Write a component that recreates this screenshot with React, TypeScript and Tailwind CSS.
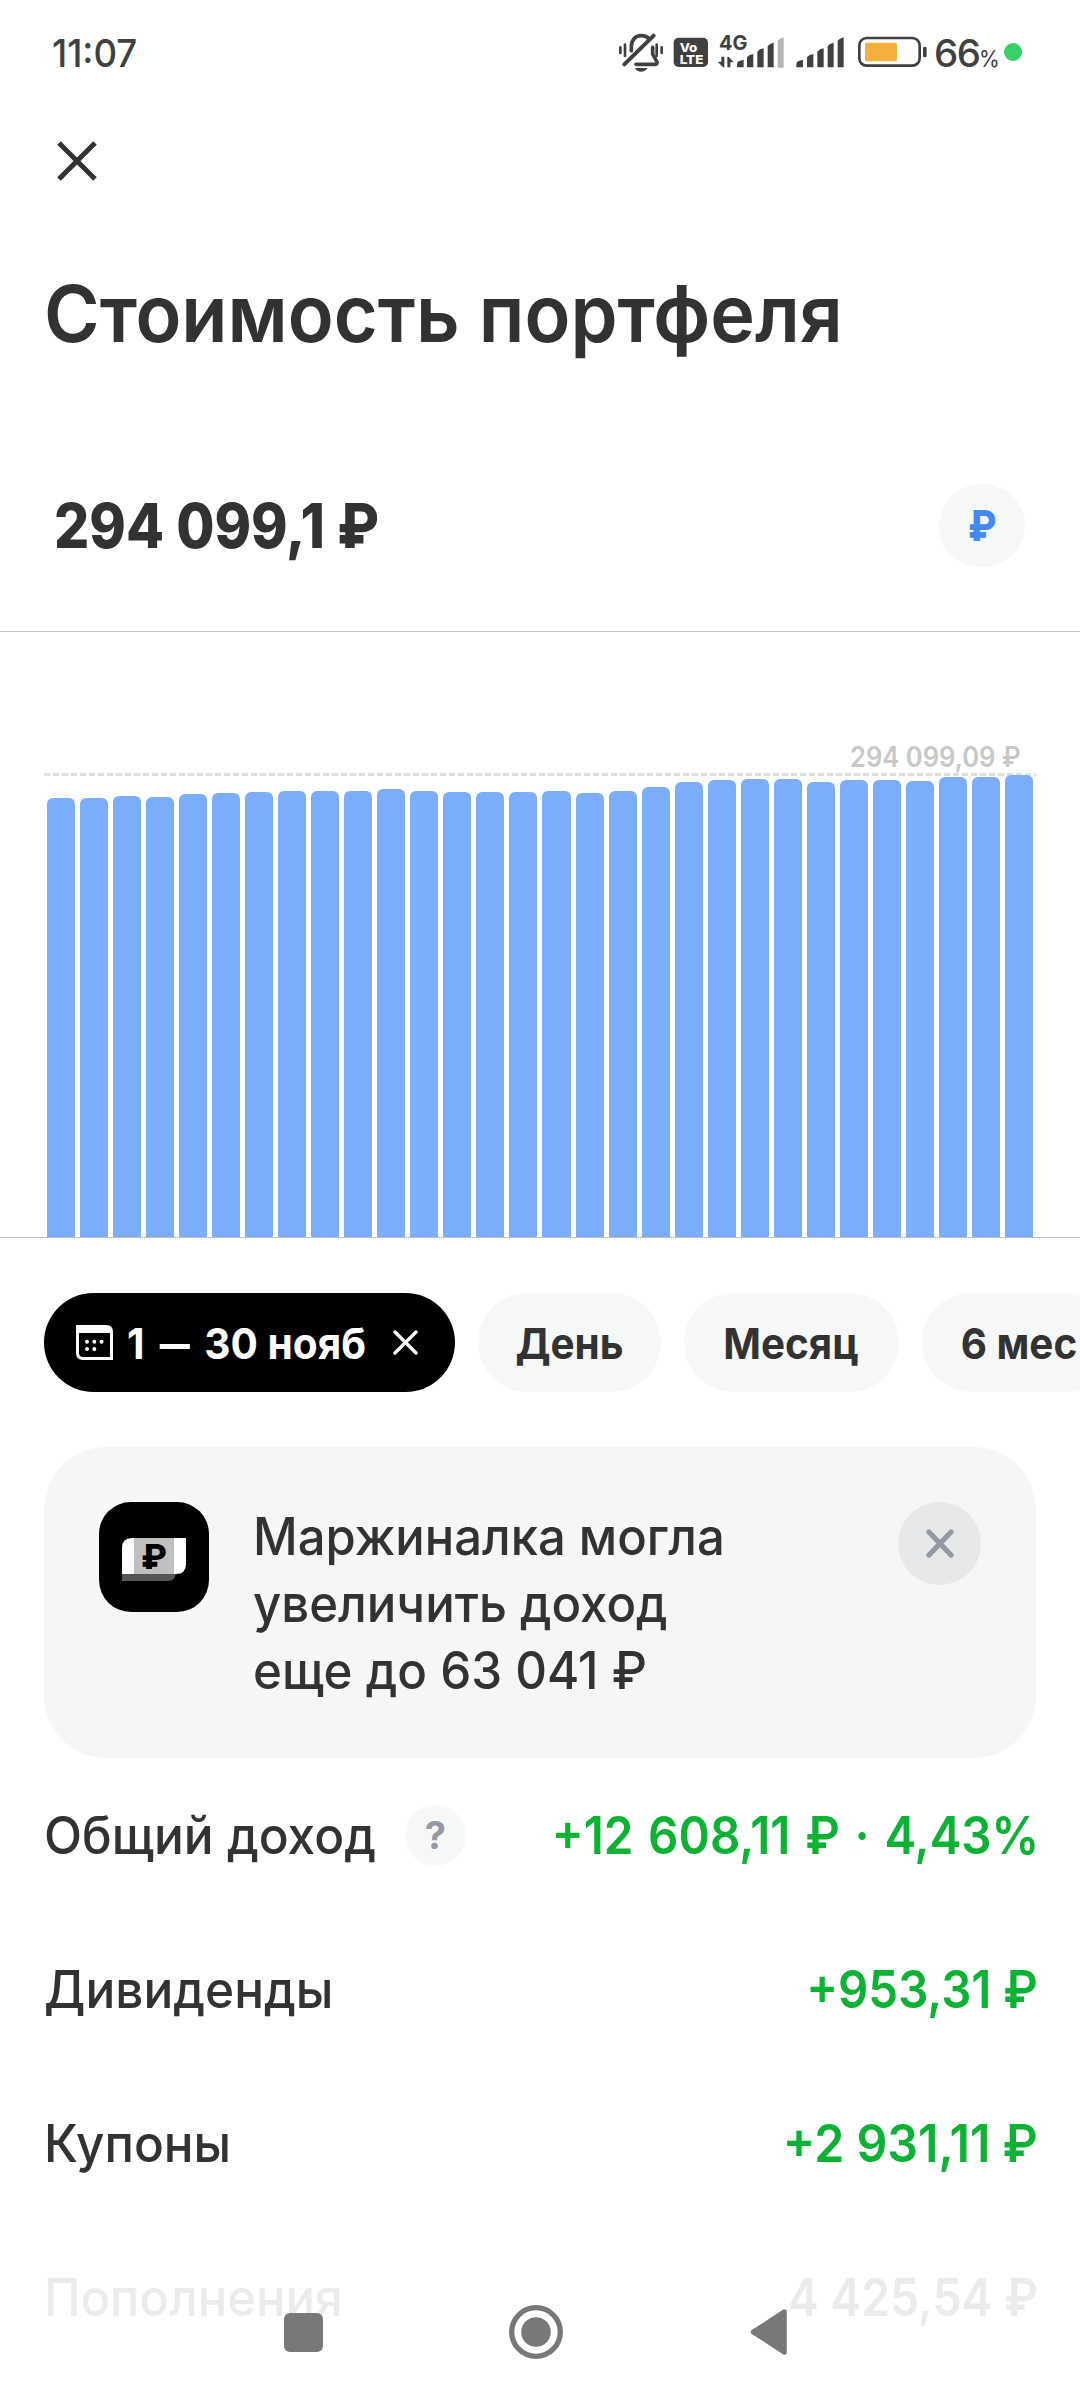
import React from 'react';

// Daily portfolio value, as bar height in px
const bars = [
  439, 439.3, 441, 440, 442.7, 443.7, 445.3, 445.7, 446.3, 445.7,
  448, 446, 445.3, 445.3, 444.7, 446.5, 444, 446.3, 450, 455.5,
  457, 458, 458, 455, 457, 456.7, 456, 460.3, 460.3, 462,
];

const periods = [
  { label: 'День', className: 'w-[183px]' },
  { label: 'Месяц', className: 'w-[215px]' },
  { label: '6 мес', className: 'w-[194px]' },
];

const rows = [
  {
    label: 'Общий доход',
    labelClass: 'w-[332px] scale-x-[0.963]',
    value: '+12 608,11 ₽ · 4,43%',
    valueClass: '-mr-px text-[#0bb234] font-semibold scale-x-[0.923] [word-spacing:3px]',
    hint: true,
  },
  {
    label: 'Дивиденды',
    labelClass: 'scale-x-[0.963]',
    value: '+953,31 ₽',
    valueClass: 'text-[#0bb234] font-semibold scale-x-[0.92]',
  },
  {
    label: 'Купоны',
    labelClass: 'scale-x-[0.96]',
    value: '+2 931,11 ₽',
    valueClass: 'text-[#0bb234] font-semibold scale-x-[0.938]',
  },
  {
    label: 'Пополнения',
    labelClass: 'scale-x-[0.952] text-[#ebebeb]',
    value: '4 425,54 ₽',
    valueClass: 'text-[#ebebeb] font-semibold scale-x-[0.9]',
  },
];

function StatusIcons() {
  return (
    <svg width="330" height="70" viewBox="0 0 990 210" fill="#404040" className="shrink-0">
      {/* muted bell */}
      <g fill="none" stroke="#404040" strokeWidth="11" strokeLinecap="round">
        <path d="M94 92V80C94 60 106 47 123 47C134 47 143 51 148 58" />
        <path d="M158 82V102L171 126Q172 133 166 133H108" />
        <path d="M161 47L73 133" strokeWidth="12" />
        <path d="M61 82V99M75 74V108M170 74V108M185 82V99" strokeWidth="8" />
      </g>
      <path d="M104 144H143Q136 155 123.500 155Q111 155 104 144Z" />
      {/* VoLTE badge */}
      <rect x="221" y="53" width="103" height="88" rx="15" />
      <text x="239" y="95" fontSize="35" fontWeight="800" fill="#fff" textLength="53" lengthAdjust="spacingAndGlyphs">Vo</text>
      <text x="239" y="131" fontSize="37" fontWeight="800" fill="#fff" textLength="71" lengthAdjust="spacingAndGlyphs">LTE</text>
      {/* mobile data */}
      <text x="357" y="89" fontSize="61" fontWeight="700" textLength="85" lengthAdjust="spacingAndGlyphs">4G</text>
      <path d="M364 110H373V142H369L353 125H364ZM382 142V110H386L401 127H391V142Z" />
      {/* first sim */}
      <path d="M411 142V131Q412 124 420 122L431 119V142ZM441 142V112L449 105L460 102V142ZM472 142V96L479 88L491 85V142ZM503 142V79L510 72L521 68V142Z" />
      <path d="M533 143V62L540 56L551 52V143Z" fill="#b5b5b5" />
      {/* second sim */}
      <path d="M589 142V131Q590 124 598 122L609 119V142ZM621 142V112L629 105L640 102V142ZM652 142V95L660 88L671 85V142ZM683 142V79L690 72L701 68V142ZM713 142V62L720 56L731 52V142Z" />
      {/* battery */}
      <rect x="778" y="54" width="181" height="83" rx="22" fill="none" stroke="#404040" strokeWidth="8" />
      <rect x="795" y="68" width="96" height="56" rx="5" fill="#f5af3d" />
      <rect x="969" y="80" width="11" height="32" rx="5" />
    </svg>
  );
}

function StatusBar() {
  return (
    <div className="flex h-[110px] items-center justify-between pl-[52px] text-[#404040]">
      <span className="origin-left scale-x-[0.95] pb-[4px] text-[38.5px] leading-none font-medium">11:07</span>
      <div className="flex w-[480px] items-center">
        <StatusIcons />
        <div className="flex items-baseline pb-[4px] pl-[4px]">
          <span className="w-[45px] text-[38.5px] leading-none font-medium tracking-[-1.4px]">66</span>
          <span className="w-[24px] origin-left scale-x-[0.9] text-[23.5px] leading-none">%</span>
        </div>
        <span className="mb-[7px] ml-px size-[18px] rounded-full bg-[#35d267]" />
      </div>
    </div>
  );
}

function CalendarIcon() {
  return (
    <svg width="37" height="35" viewBox="0 0 37 35" fill="#fff" className="shrink-0">
      <path
        fillRule="evenodd"
        d="M0 0H30Q37 0 37 7V35H7Q0 35 0 28ZM3 8V28Q3 32 7 32H34V8Z"
      />
      <circle cx="11" cy="16.700" r="2" />
      <circle cx="18.300" cy="16.700" r="2" />
      <circle cx="25.500" cy="16.700" r="2" />
      <circle cx="11" cy="24" r="2" />
      <circle cx="18.300" cy="24" r="2" />
    </svg>
  );
}

function Chart() {
  return (
    <div className="relative flex h-[606px] items-end gap-[5px] border-b border-[#c2c2c2] px-[46.5px]">
      <svg className="absolute top-[141px] left-[44px]" width="992" height="3">
        <line x1="0" y1="1.500" x2="992" y2="1.500" stroke="#dfdfdf" strokeWidth="3" strokeDasharray="6 3" />
      </svg>
      <span className="absolute top-[110px] right-[59px] origin-right scale-x-[0.914] text-[28px] leading-[30px] font-semibold text-[#c8c8c8]">
        294 099,09 ₽
      </span>
      {bars.map((h, i) => (
        <div key={i} className="relative flex-1 rounded-t-[6px] bg-[#7badfb]" style={{ height: h }} />
      ))}
    </div>
  );
}

function Periods() {
  return (
    <div className="flex h-[99px] gap-[23px] overflow-hidden pl-[44px] text-[43px] leading-none font-bold">
      <button className="flex w-[411px] shrink-0 items-center rounded-full bg-black pl-[32px] text-white">
        <CalendarIcon />
        <span className="w-[280px] shrink-0 pt-[2px] pl-[14px] text-left whitespace-nowrap">
          <span className="inline-block origin-left scale-x-[0.944]">
            1 <span className="inline-block scale-x-[0.74]">—</span> 30 нояб
          </span>
        </span>
        <svg width="25" height="25" viewBox="0 0 25 25" stroke="#fff" strokeWidth="3.400" strokeLinecap="round" className="shrink-0">
          <path d="M2 2L23 23M23 2L2 23" />
        </svg>
      </button>
      {periods.map((p) => (
        <button key={p.label} className={`shrink-0 rounded-full bg-[#f6f8f8] pt-[2px] ${p.className}`}>
          <span className="inline-block scale-x-[0.94]">{p.label}</span>
        </button>
      ))}
    </div>
  );
}

function Banner() {
  return (
    <div className="mx-[44px] mt-[55px] flex h-[311px] rounded-[62px] bg-[#f5f6f7] pt-[55px] pl-[55px]">
      <svg width="110" height="110" viewBox="0 0 110 110" className="shrink-0">
        <rect width="110" height="110" rx="32" />
        <path d="M23 71H77Q76 79 69 79H23Z" fill="#555" />
        <path d="M23 72V46Q23 36 33 36H87V62Q87 72 77 72Z" fill="#fff" />
        <path d="M35 36H75V72H35Z" fill="#bfbfbf" />
        <text x="55" y="66.500" fontSize="34" fontWeight="800" textAnchor="middle">₽</text>
      </svg>
      <p className="ml-[44px] w-[645px] pt-px text-[51.5px] leading-[67px] font-medium">
        <span className="block origin-left scale-x-[0.951]">Маржиналка могла</span>
        <span className="block origin-left scale-x-[0.954]">увеличить доход</span>
        <span className="block origin-left scale-x-[0.957]">еще до 63 041 ₽</span>
      </p>
      <button className="flex size-[83px] items-center justify-center rounded-full bg-[#e7e8ea]">
        <svg width="28" height="29" viewBox="0 0 28 29" stroke="#9299a2" strokeWidth="5.200" strokeLinecap="round">
          <path d="M3 3L25 26M25 3L3 26" />
        </svg>
      </button>
    </div>
  );
}

function NavBar() {
  return (
    <div className="absolute inset-x-0 bottom-[41px] flex h-[54px] items-center">
      <div className="ml-[284px] h-[39px] w-[39px] rounded-[6px] bg-[#787878]" />
      <svg width="54" height="54" viewBox="0 0 54 54" className="ml-[186px]">
        <circle cx="27" cy="27" r="24.300" fill="none" stroke="#787878" strokeWidth="5.300" />
        <circle cx="27" cy="27" r="14.800" fill="#787878" />
      </svg>
      <svg width="37" height="46" viewBox="0 0 37 46" className="ml-[187px]">
        <path d="M3 23L34.500 2.500V43.500Z" fill="#787878" stroke="#787878" strokeWidth="4.500" strokeLinejoin="round" />
      </svg>
    </div>
  );
}

export default function App() {
  return (
    <div className="relative h-[2400px] w-[1080px] overflow-hidden bg-white font-[Inter,sans-serif] text-[#323232]">
      <StatusBar />

      <div className="flex h-[102px] items-center pl-[57px]">
        <svg width="40" height="40" viewBox="0 0 40 40" stroke="#323232" strokeWidth="5">
          <path d="M2 2L38 38M38 2L2 38" />
        </svg>
      </div>

      <h1 className="ml-[44px] origin-left scale-x-[0.956] text-[79px] leading-[202px] font-semibold whitespace-nowrap">
        Стоимость портфеля
      </h1>

      <div className="flex h-[218px] items-center justify-between border-b border-[#c2c2c2] pt-[6px] pr-[55px] pl-[54px]">
        <span className="origin-left scale-x-[0.9] text-[61.5px] leading-none font-extrabold">294 099,1 ₽</span>
        <span className="flex h-[83px] w-[86px] items-center justify-center rounded-full bg-[#f6f8f8] text-[42.5px] leading-none font-extrabold text-[#438af5]">
          <span className="scale-x-[0.88] pt-px">₽</span>
        </span>
      </div>

      <Chart />
      <div className="h-[55px]" />
      <Periods />
      <Banner />

      {rows.map((row) => (
        <div key={row.label} className="flex h-[154.2px] items-center justify-between pr-[42px] pl-[44px] text-[51.5px] leading-none font-medium">
          <div className="flex items-center">
            <span className={`origin-left pt-px whitespace-nowrap ${row.labelClass}`}>{row.label}</span>
            {row.hint && (
              <span className="ml-[29px] flex size-[61px] items-center justify-center rounded-full bg-[#f6f8f8] text-[38px] font-bold text-[#9298a4]">
                ?
              </span>
            )}
          </div>
          <span className={`origin-right pt-px whitespace-nowrap ${row.valueClass}`}>{row.value}</span>
        </div>
      ))}

      <NavBar />
    </div>
  );
}
